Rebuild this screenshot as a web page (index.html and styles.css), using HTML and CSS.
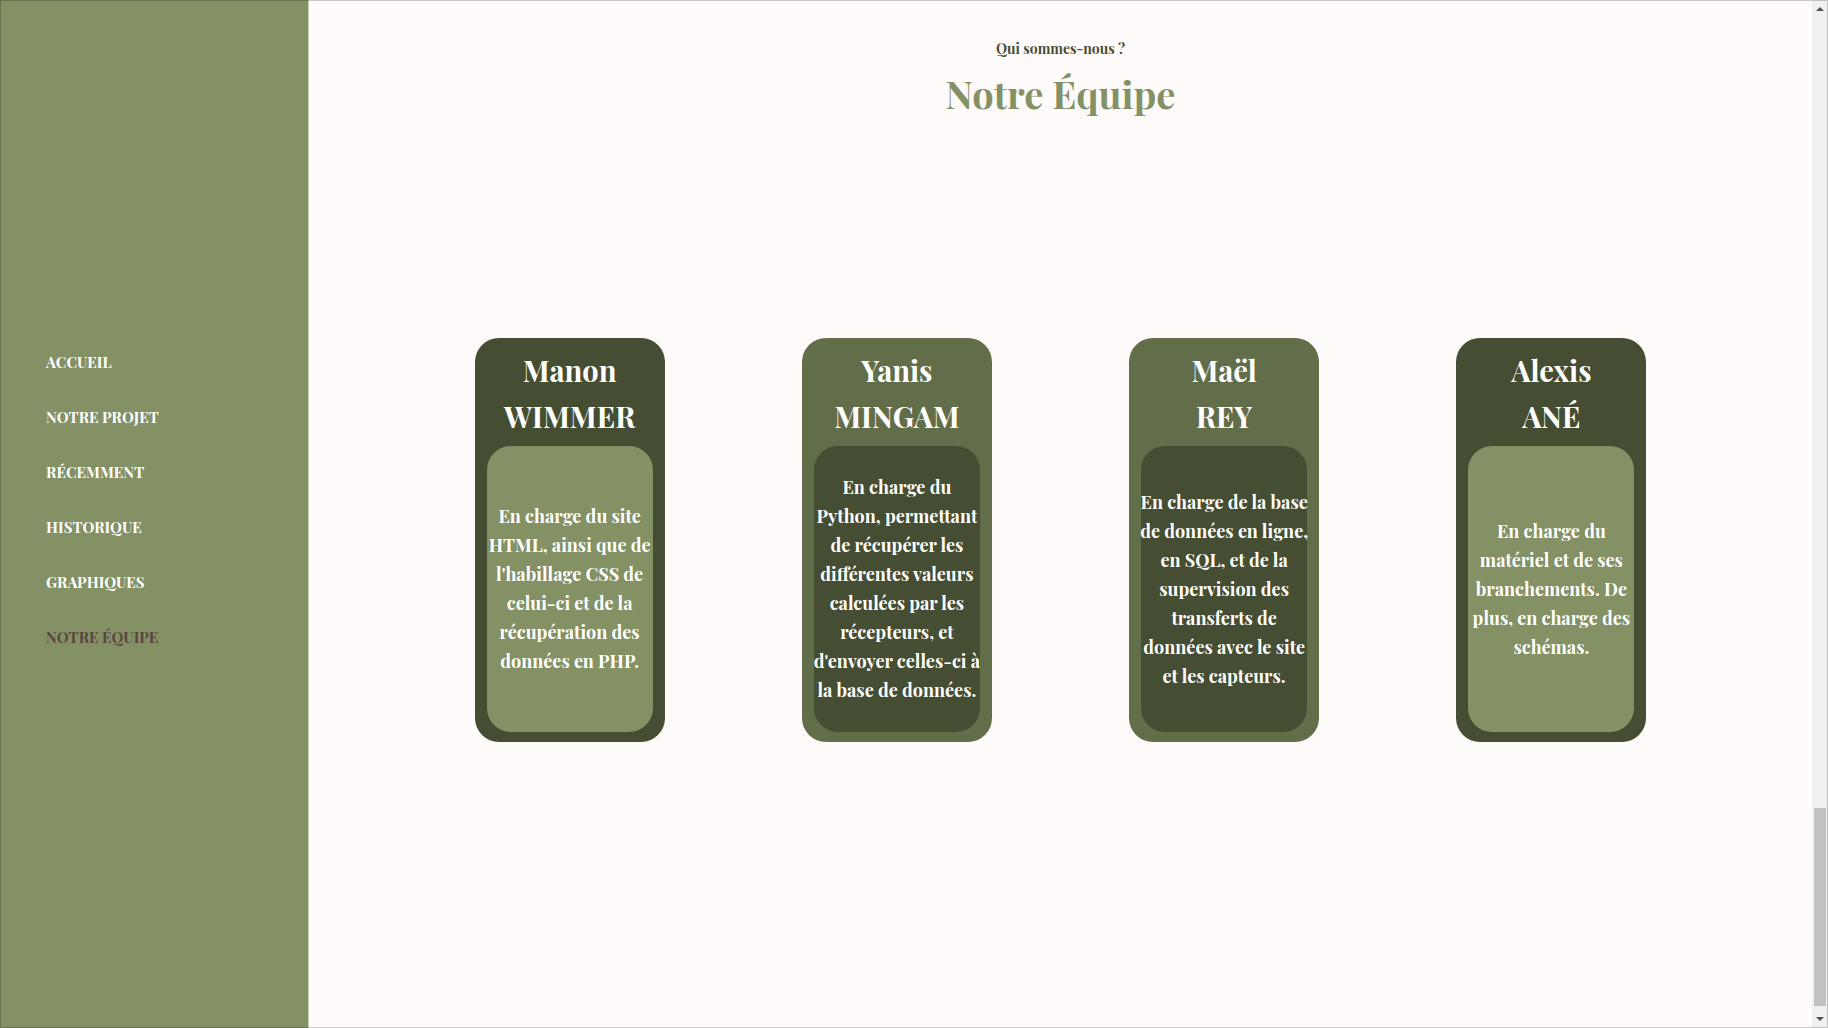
FILE: index.html
```html
<!DOCTYPE html>
<html lang="fr">
<head>
<meta charset="utf-8">
<meta name="viewport" content="width=device-width, initial-scale=1">
<title>Notre Équipe</title>
<link rel="stylesheet" href="styles.css">
</head>
<body>
<div class="page">
  <nav class="sidebar" aria-label="Navigation principale">
    <a href="#accueil">ACCUEIL</a>
    <a href="#projet">NOTRE PROJET</a>
    <a href="#recemment">RÉCEMMENT</a>
    <a href="#historique">HISTORIQUE</a>
    <a href="#graphiques">GRAPHIQUES</a>
    <a href="#equipe" class="active" aria-current="page">NOTRE ÉQUIPE</a>
  </nav>
  <main class="content" id="equipe">
    <header class="heading">
      <p class="eyebrow">Qui sommes-nous ?</p>
      <h1>Notre Équipe</h1>
    </header>
    <section class="team">
      <article class="card dark">
        <h2>Manon<br>WIMMER</h2>
        <div class="role"><p>En charge du site<br>HTML, ainsi que de<br>l'habillage CSS de<br>celui-ci et de la<br>récupération des<br>données en PHP.</p></div>
      </article>
      <article class="card olive">
        <h2>Yanis<br>MINGAM</h2>
        <div class="role"><p>En charge du<br>Python, permettant<br>de récupérer les<br>différentes valeurs<br>calculées par les<br>récepteurs, et<br>d'envoyer celles-ci à<br>la base de données.</p></div>
      </article>
      <article class="card olive">
        <h2>Maël<br>REY</h2>
        <div class="role"><p>En charge de la base<br>de données en ligne,<br>en SQL, et de la<br>supervision des<br>transferts de<br>données avec le site<br>et les capteurs.</p></div>
      </article>
      <article class="card dark">
        <h2>Alexis<br>ANÉ</h2>
        <div class="role"><p>En charge du<br>matériel et de ses<br>branchements. De<br>plus, en charge des<br>schémas.</p></div>
      </article>
    </section>
  </main>
  <div class="scrollbar" aria-hidden="true">
    <svg class="arrow" viewBox="0 0 15 17"><path d="M8 6l4 4H4z"/></svg>
    <div class="track"><div class="thumb"></div></div>
    <svg class="arrow" viewBox="0 0 15 17"><path d="M8 11L4 7h8z"/></svg>
  </div>
</div>
</body>
</html>
```

FILE: styles.css
```css
:root {
  --sage: #839165;
  --olive: #626d4a;
  --dark: #454d33;
  --paper: #fffafa;
  --active: #5a4540;
}

* {
  box-sizing: border-box;
  margin: 0;
}

body {
  background: var(--paper);
  color: #fff;
  font-family: "Playfair Display", "Liberation Serif", serif;
  font-weight: 700;
}

.page {
  display: flex;
  min-height: 100vh;
}

/* thin frame over the whole window */
.page::after {
  content: "";
  position: fixed;
  inset: 0;
  border: 1px solid rgba(0, 0, 0, 0.2);
  pointer-events: none;
}

.sidebar {
  display: flex;
  flex: 0 0 309px;
  flex-direction: column;
  justify-content: center;
  padding: 0 46px 29px;
  background: var(--sage);
  border-right: 1px solid #c8ccb8;
}

.sidebar a {
  color: #fff;
  font-size: 15px;
  line-height: 55px;
  text-decoration: none;
}

.sidebar a.active {
  color: var(--active);
}

.content {
  flex: 1;
  padding: 35px 97px;
}

.heading {
  text-align: center;
}

.eyebrow {
  color: var(--dark);
  font-size: 14px;
  line-height: 28px;
}

h1 {
  margin-top: 5px;
  color: var(--sage);
  font-size: 38px;
  line-height: 52px;
}

.team {
  display: grid;
  grid-template-columns: repeat(4, 1fr);
  justify-items: center;
  margin-top: 218px;
}

.card {
  display: flex;
  flex-direction: column;
  gap: 7px;
  width: 190px;
  padding: 9px 12px 10px;
  border-radius: 24px;
  text-align: center;
}

.card h2 {
  font-size: 29px;
  line-height: 46px;
}

.role {
  display: flex;
  flex: 1;
  align-items: center;
  justify-content: center;
  min-height: 286px;
  border-radius: 24px;
  font-size: 18px;
  line-height: 29px;
  white-space: nowrap;
}

.dark,
.olive .role {
  background: var(--dark);
}

.olive {
  background: var(--olive);
}

.dark .role {
  background: var(--sage);
}

.scrollbar {
  position: sticky;
  top: 0;
  display: flex;
  flex: 0 0 16px;
  flex-direction: column;
  height: 100vh;
  padding: 1px 1px 1px 0;
  background: #f0f0f0;
}

.arrow {
  flex: 0 0 17px;
  fill: #505050;
}

.track {
  display: flex;
  flex: 1;
  flex-direction: column;
  justify-content: flex-end;
  padding: 0 1px 4px 2px;
}

.thumb {
  height: 20%;
  background: #c1c1c1;
}
```
